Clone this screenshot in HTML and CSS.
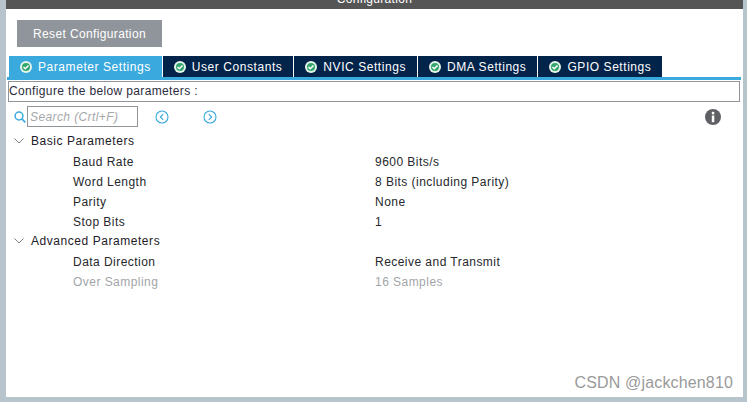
FILE: index.html
```html
<!DOCTYPE html>
<html lang="en">
<head>
<meta charset="utf-8">
<title>Configuration</title>
<link rel="stylesheet" href="styles.css">
</head>
<body>
<div class="frame">
  <main class="panel">
    <header class="title"><span>Configuration</span></header>
    <button class="reset">Reset Configuration</button>
    <nav class="tabs">
      <div class="tab active"><svg class="check" viewBox="0 0 12 12"><circle cx="6" cy="6" r="6" fill="#e4f5ea"/><circle cx="6" cy="6" r="4" fill="#35a56e"/><path d="M3.5 6l1.8 1.8 3.2-3.300" fill="none" stroke="#fff" stroke-width="1.5"/></svg><span>Parameter Settings</span></div>
      <div class="tab"><svg class="check" viewBox="0 0 12 12"><circle cx="6" cy="6" r="6" fill="#e4f5ea"/><circle cx="6" cy="6" r="4" fill="#35a56e"/><path d="M3.5 6l1.8 1.8 3.2-3.300" fill="none" stroke="#fff" stroke-width="1.5"/></svg><span>User Constants</span></div>
      <div class="tab"><svg class="check" viewBox="0 0 12 12"><circle cx="6" cy="6" r="6" fill="#e4f5ea"/><circle cx="6" cy="6" r="4" fill="#35a56e"/><path d="M3.5 6l1.8 1.8 3.2-3.300" fill="none" stroke="#fff" stroke-width="1.5"/></svg><span>NVIC Settings</span></div>
      <div class="tab"><svg class="check" viewBox="0 0 12 12"><circle cx="6" cy="6" r="6" fill="#e4f5ea"/><circle cx="6" cy="6" r="4" fill="#35a56e"/><path d="M3.5 6l1.8 1.8 3.2-3.300" fill="none" stroke="#fff" stroke-width="1.5"/></svg><span>DMA Settings</span></div>
      <div class="tab"><svg class="check" viewBox="0 0 12 12"><circle cx="6" cy="6" r="6" fill="#e4f5ea"/><circle cx="6" cy="6" r="4" fill="#35a56e"/><path d="M3.5 6l1.8 1.8 3.2-3.300" fill="none" stroke="#fff" stroke-width="1.5"/></svg><span>GPIO Settings</span></div>
    </nav>
    <div class="hint">Configure the below parameters :</div>
    <div class="toolbar">
      <svg class="search-icon" viewBox="0 0 12 12"><circle cx="5" cy="5" r="3.9" fill="none" stroke="#3aa9dd" stroke-width="1.5"/><path d="M7.9 7.9l3.4 3.4" stroke="#3aa9dd" stroke-width="1.7"/></svg>
      <div class="search">Search (Crtl+F)</div>
      <svg class="nav prev" viewBox="0 0 14 14"><circle cx="7" cy="7" r="6" fill="none" stroke="#3aa9dd" stroke-width="1.1"/><path d="M8.2 4.2L5.4 7l2.8 2.8" fill="none" stroke="#3aa9dd" stroke-width="1.2"/></svg>
      <svg class="nav next" viewBox="0 0 14 14"><circle cx="7" cy="7" r="6" fill="none" stroke="#3aa9dd" stroke-width="1.1"/><path d="M5.8 4.2L8.6 7l-2.8 2.8" fill="none" stroke="#3aa9dd" stroke-width="1.2"/></svg>
      <svg class="info" viewBox="0 0 16 16"><circle cx="8" cy="8" r="8" fill="#5f6064"/><rect x="6.8" y="2.8" width="2.5" height="2.5" fill="#fff"/><rect x="6.8" y="6.5" width="2.5" height="6.7" fill="#fff"/></svg>
    </div>
    <section class="tree">
      <div class="group"><svg class="chev" viewBox="0 0 10 6"><path d="M.5.5L5 5 9.500.5" fill="none" stroke="#7c8288" stroke-width="1"/></svg><span>Basic Parameters</span></div>
      <div class="row"><span>Baud Rate</span><span>9600 Bits/s</span></div>
      <div class="row"><span>Word Length</span><span>8 Bits (including Parity)</span></div>
      <div class="row"><span>Parity</span><span>None</span></div>
      <div class="row"><span>Stop Bits</span><span>1</span></div>
      <div class="group"><svg class="chev" viewBox="0 0 10 6"><path d="M.5.5L5 5 9.500.5" fill="none" stroke="#7c8288" stroke-width="1"/></svg><span>Advanced Parameters</span></div>
      <div class="row"><span>Data Direction</span><span>Receive and Transmit</span></div>
      <div class="row disabled"><span>Over Sampling</span><span>16 Samples</span></div>
    </section>
  </main>
  <div class="watermark">CSDN @jackchen810</div>
</div>
</body>
</html>
```
FILE: styles.css
```css
* { box-sizing: border-box; }
html, body { margin: 0; height: 402px; overflow: hidden; }
body {
  background: #b8c4cc;
  font-family: "Liberation Sans", Arial, sans-serif;
  font-size: 12px;
  color: #26282c;
}
.frame { position: relative; height: 402px; padding: 0 4px 5px 6px; }
.panel { height: 397px; background: #fff; overflow: hidden; }
.title {
  height: 9px;
  background: #555555;
  color: #fff;
  text-align: center;
  overflow: hidden;
  line-height: 9px;
  letter-spacing: .3px;
}
.title span { display: block; margin-top: -5px; }
.reset {
  display: block;
  width: 145px;
  height: 27px;
  margin: 11px 0 0 11px;
  padding: 0;
  border: 0;
  background: #90959b;
  color: #fff;
  font: 12px "Liberation Sans", Arial, sans-serif;
  letter-spacing: .36px;
}
.tabs {
  display: flex;
  gap: 1px;
  height: 24px;
  margin: 9px 2px 0 1px;
  padding: 0 0 3px 2px;
  border-bottom: 3px solid #3aa9dd;
}
.tab {
  display: flex;
  align-items: center;
  gap: 6px;
  height: 21px;
  padding: 0 11px;
  background: #02234a;
  color: #fff;
  letter-spacing: .56px;
  white-space: nowrap;
}
.tab.active { background: #3aa9dd; }
.check { width: 12px; height: 12px; flex: none; }
.hint {
  height: 21px;
  margin: 1px 3px 0 2px;
  border: 1px solid #909599;
  line-height: 19px;
  letter-spacing: .36px;
  color: #2c2c40;
}
.toolbar { display: flex; align-items: center; height: 21px; margin-top: 4px; }
.search-icon { width: 12px; height: 12px; margin: 0 0 0 8px; flex: none; }
.search {
  width: 111px;
  height: 21px;
  margin-left: 1px;
  padding-left: 2px;
  border: 1px solid #909599;
  color: #a5a7aa;
  font-style: italic;
  line-height: 20px;
  letter-spacing: .4px;
}
.nav { width: 14px; height: 14px; flex: none; }
.prev { margin-left: 17px; }
.next { margin-left: 34px; }
.info { width: 16px; height: 16px; flex: none; margin-left: 488px; }
.tree { margin-top: 4px; }
.group, .row { height: 20px; line-height: 22px; white-space: nowrap; }
.group { display: flex; align-items: center; padding-left: 8px; color: #1e2028; letter-spacing: .55px; }
.chev { width: 10px; height: 6px; margin-right: 7px; flex: none; }
.row { display: grid; grid-template-columns: 302px 1fr; padding-left: 67px; letter-spacing: .46px; }
.disabled { color: #a2a5a8; }
.watermark {
  position: absolute;
  right: 14px;
  bottom: 10px;
  color: #9a9a9a;
  font-size: 16px;
  letter-spacing: .15px;
}
```
